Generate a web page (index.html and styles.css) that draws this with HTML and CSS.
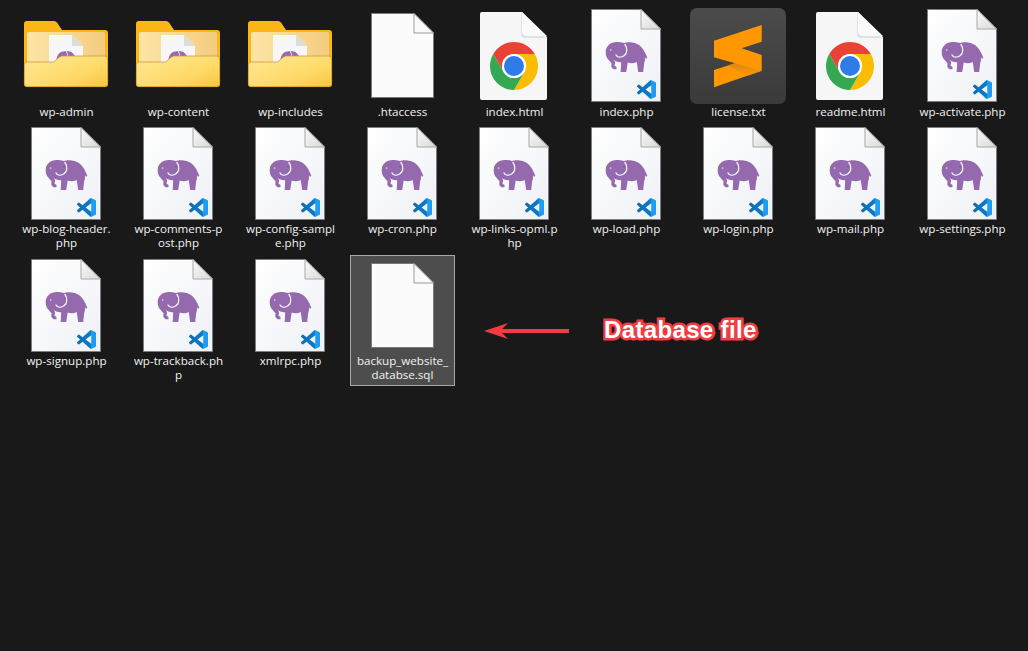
FILE: index.html
```html
<!DOCTYPE html>
<html lang="en">
<head>
    <meta charset="UTF-8">
    <meta name="viewport" content="width=device-width, initial-scale=1.0">
    <title>Website files</title>
    <link rel="stylesheet" href="styles.css">
</head>
<body>
    <!-- shared icons -->
    <svg class="icon-defs" aria-hidden="true">
        <defs>
            <linearGradient id="paper" x1="0" y1="0" x2="1" y2="1">
                <stop offset="0" stop-color="#ffffff"/>
                <stop offset="1" stop-color="#eef1f6"/>
            </linearGradient>
            <linearGradient id="fold" x1="0" y1="0" x2="1" y2="1">
                <stop offset="0" stop-color="#fafafa"/>
                <stop offset="1" stop-color="#d9d9d9"/>
            </linearGradient>
            <linearGradient id="vscode" x1="0" y1="0" x2="1" y2="0">
                <stop offset="0" stop-color="#0b6fb8"/>
                <stop offset="0.72" stop-color="#0a7bcb"/>
                <stop offset="0.72" stop-color="#1f9cf0"/>
                <stop offset="1" stop-color="#1f9cf0"/>
            </linearGradient>
            <linearGradient id="folder-inner" x1="0" y1="0" x2="1" y2="0">
                <stop offset="0" stop-color="#fde4a6"/>
                <stop offset="1" stop-color="#f3cd80"/>
            </linearGradient>
            <linearGradient id="folder-front" x1="0" y1="0" x2="1" y2="1">
                <stop offset="0" stop-color="#fee999"/>
                <stop offset="0.65" stop-color="#ffd966"/>
                <stop offset="1" stop-color="#fdc53c"/>
            </linearGradient>
            <linearGradient id="sublime-bg" x1="0" y1="0" x2="0" y2="1">
                <stop offset="0" stop-color="#4b4b4b"/>
                <stop offset="1" stop-color="#3a3a3a"/>
            </linearGradient>
            <linearGradient id="sublime-shade" x1="0" y1="0" x2="0" y2="1">
                <stop offset="0" stop-color="#dd8610"/>
                <stop offset="1" stop-color="#ff9800"/>
            </linearGradient>

            <symbol id="elephant" overflow="visible">
                <path fill="#9469ad" d="M11 0C5 0 0 4 0 10C0 14 1 16 3 18L6 21.5C5.5 23 5 25 7 26.5C8 27.5 10 27.5 11 27L10.5 24.5C9 24.5 8.5 23.5 9 22.5C10 20.5 9 19 7.5 17.5C9 19 11 20 13 20L15.5 20.5L15 30L20.5 30L22 20.5C25 21.5 28 21.5 31 20L32.5 30L37.5 30L38.5 21C39.5 19 39.5 17 39 15L40.5 17L41.5 15.5C39 9 35 1 26 .5C22 0 20 1 18 1C16 0 13 0 11 0Z"/>
                <path fill="none" stroke="#f3f4f7" stroke-width="1.3" d="M19 2C22 6 22 12 17 14.5C14 16 11 15 10 12.5"/>
                <circle cx="5" cy="8" r=".7" fill="#f3f4f7"/>
            </symbol>

            <symbol id="icon-php" overflow="visible">
                <path fill="url(#paper)" stroke="#7d7d7d" d="M17.5 .5H67L86.5 20V92.5H17.5Z"/>
                <path fill="url(#fold)" stroke="#a8a8a8" d="M67 .5V20H86.5Z"/>
                <use href="#elephant" x="31.7" y="33"/>
                <svg x="63" y="71" width="19" height="19" viewBox="0 0 24 24">
                    <path fill="url(#vscode)" d="M23.15 2.587L18.21.21a1.494 1.494 0 0 0-1.705.29l-9.46 8.63-4.12-3.128a.999.999 0 0 0-1.276.057L.327 7.261A1 1 0 0 0 .326 8.74L3.899 12 .326 15.26a1 1 0 0 0 .001 1.479L1.65 17.94a.999.999 0 0 0 1.276.057l4.12-3.128 9.46 8.63a1.492 1.492 0 0 0 1.704.29l4.942-2.377A1.5 1.5 0 0 0 24 20.06V3.939a1.5 1.5 0 0 0-.85-1.352zm-5.146 14.861L10.826 12l7.178-5.448v10.896z"/>
                </svg>
            </symbol>

            <symbol id="icon-blank" overflow="visible">
                <path fill="#fbfbfb" stroke="#7a7a7a" d="M21.5 4.5H64L83.5 24V88.5H21.5Z"/>
                <path fill="#fafafa" stroke="#9a9a9a" d="M64 4.5V24H83.5Z"/>
            </symbol>

            <symbol id="icon-chrome" overflow="visible">
                <path fill="#f6f6f6" d="M20 3H60L85 28V89a2 2 0 0 1-2 2H20a2 2 0 0 1-2-2V5a2 2 0 0 1 2-2Z"/>
                <path fill="#e2e2e2" d="M60 3L85 28H64a4 4 0 0 1-4-4Z" transform="translate(-1 1)"/>
                <path fill="#fafafa" d="M60 3L85 27H65a5 5 0 0 1-5-5Z"/>
                <g transform="translate(28 33)">
                    <path fill="#ea4335" d="M3.22 12A24 24 0 0 1 44.78 12H24A12 12 0 0 0 13.61 30Z"/>
                    <path fill="#fbbc04" d="M44.78 12A24 24 0 0 1 24 48L34.39 30A12 12 0 0 0 24 12Z"/>
                    <path fill="#34a853" d="M24 48A24 24 0 0 1 3.22 12L13.61 30A12 12 0 0 0 34.39 30Z"/>
                    <circle cx="24" cy="24" r="12" fill="#fff"/>
                    <circle cx="24" cy="24" r="10" fill="#2f7be8"/>
                </g>
            </symbol>

            <symbol id="icon-sublime" overflow="visible">
                <rect x="4" y="-1" width="96" height="96" rx="7" fill="url(#sublime-bg)"/>
                <path fill="#ff9800" d="M28 31.7L75.7 16V32.7L55.7 39.3L75.7 46V61.7L28 78.3V61L49 54.3L28 48.3Z"/>
                <path fill="url(#sublime-shade)" d="M49 54.3L75.7 61.7L62 66.5L42 56.5Z"/>
            </symbol>

            <symbol id="icon-folder" overflow="visible">
                <path fill="#fbb717" d="M10 15a3 3 0 0 1 3-3H40a4 4 0 0 1 3 1.5L48 21H91a3 3 0 0 1 3 3V75a3 3 0 0 1-3 3H13a3 3 0 0 1-3-3Z"/>
                <rect x="13" y="23" width="78" height="40" rx="2" fill="url(#folder-inner)"/>
                <path fill="#f7f7f9" d="M35 26H58L69 37V60H35Z"/>
                <path fill="#dcdcdc" d="M58 26V37H69Z"/>
                <path fill="#9469ad" d="M42 55C42 46 46 42 50 42.5C55 41 62 43 63 55Z"/>
                <path fill="none" stroke="#f3f4f7" d="M52 42C54 45 54 48 52 52"/>
                <path fill="url(#folder-front)" stroke="#d39d32" stroke-width=".8" d="M10.4 56a3 3 0 0 1 3-3H38C42 53 44 47 49 47H90.6a3 3 0 0 1 3 3V74.6a3 3 0 0 1-3 3H13.4a3 3 0 0 1-3-3Z"/>
            </symbol>
        </defs>
    </svg>

    <div class="file-grid">
        <div class="file first-row"><svg class="file-icon" viewBox="0 -1 105 96"><use href="#icon-folder"/></svg><span class="file-name">wp-admin</span></div>
        <div class="file first-row"><svg class="file-icon" viewBox="0 -1 105 96"><use href="#icon-folder"/></svg><span class="file-name">wp-content</span></div>
        <div class="file first-row"><svg class="file-icon" viewBox="0 -1 105 96"><use href="#icon-folder"/></svg><span class="file-name">wp-includes</span></div>
        <div class="file first-row"><svg class="file-icon" viewBox="0 -1 105 96"><use href="#icon-blank"/></svg><span class="file-name">.htaccess</span></div>
        <div class="file first-row"><svg class="file-icon" viewBox="0 -1 105 96"><use href="#icon-chrome"/></svg><span class="file-name">index.html</span></div>
        <div class="file first-row"><svg class="file-icon" viewBox="0 -1 105 96"><use href="#icon-php"/></svg><span class="file-name">index.php</span></div>
        <div class="file first-row"><svg class="file-icon" viewBox="0 -1 105 96"><use href="#icon-sublime"/></svg><span class="file-name">license.txt</span></div>
        <div class="file first-row"><svg class="file-icon" viewBox="0 -1 105 96"><use href="#icon-chrome"/></svg><span class="file-name">readme.html</span></div>
        <div class="file first-row"><svg class="file-icon" viewBox="0 -1 105 96"><use href="#icon-php"/></svg><span class="file-name">wp-activate.php</span></div>

        <div class="file"><svg class="file-icon" viewBox="0 -1 105 96"><use href="#icon-php"/></svg><span class="file-name">wp-blog-header.<br>php</span></div>
        <div class="file"><svg class="file-icon" viewBox="0 -1 105 96"><use href="#icon-php"/></svg><span class="file-name">wp-comments-p<br>ost.php</span></div>
        <div class="file"><svg class="file-icon" viewBox="0 -1 105 96"><use href="#icon-php"/></svg><span class="file-name">wp-config-sampl<br>e.php</span></div>
        <div class="file"><svg class="file-icon" viewBox="0 -1 105 96"><use href="#icon-php"/></svg><span class="file-name">wp-cron.php</span></div>
        <div class="file"><svg class="file-icon" viewBox="0 -1 105 96"><use href="#icon-php"/></svg><span class="file-name">wp-links-opml.p<br>hp</span></div>
        <div class="file"><svg class="file-icon" viewBox="0 -1 105 96"><use href="#icon-php"/></svg><span class="file-name">wp-load.php</span></div>
        <div class="file"><svg class="file-icon" viewBox="0 -1 105 96"><use href="#icon-php"/></svg><span class="file-name">wp-login.php</span></div>
        <div class="file"><svg class="file-icon" viewBox="0 -1 105 96"><use href="#icon-php"/></svg><span class="file-name">wp-mail.php</span></div>
        <div class="file"><svg class="file-icon" viewBox="0 -1 105 96"><use href="#icon-php"/></svg><span class="file-name">wp-settings.php</span></div>

        <div class="file"><svg class="file-icon" viewBox="0 -1 105 96"><use href="#icon-php"/></svg><span class="file-name">wp-signup.php</span></div>
        <div class="file"><svg class="file-icon" viewBox="0 -1 105 96"><use href="#icon-php"/></svg><span class="file-name">wp-trackback.ph<br>p</span></div>
        <div class="file"><svg class="file-icon" viewBox="0 -1 105 96"><use href="#icon-php"/></svg><span class="file-name">xmlrpc.php</span></div>
        <div class="file selected"><svg class="file-icon" viewBox="0 -1 105 96"><use href="#icon-blank"/></svg><span class="file-name">backup_website_<br>databse.sql</span></div>
    </div>

    <!-- annotation drawn over the screenshot -->
    <svg class="note-arrow" viewBox="0 0 86 18" aria-hidden="true">
        <path fill="#ef3d42" d="M0 9L24 1L18 7H85V11H18L24 17Z"/>
    </svg>
    <div class="note-text">Database file</div>
</body>
</html>
```

FILE: styles.css
```css
body {
    font-family: 'Open Sans', 'Noto Sans', sans-serif;
    background-color: #191919;
    margin: 0;
    height: 651px;
    overflow: hidden;
    position: relative;
}

.icon-defs {
    display: block;
    width: 0;
    height: 0;
}

.file-grid {
    display: grid;
    grid-template-columns: repeat(9, 105px);
    column-gap: 7px;
    row-gap: 1px;
    align-items: start;
    padding: 5px 0 0 14px;
}

.file {
    display: flex;
    flex-direction: column;
    align-items: center;
    padding: 3px 0 4px;
}

.file.first-row {
    padding-bottom: 3px;
}

.first-row .file-name {
    margin-top: 1px;
}

.file.selected {
    background-color: #4d4d4d;
    outline: 1px solid #a6a6a6;
    outline-offset: -1px;
}

.file-icon {
    display: block;
    width: 105px;
    height: 96px;
    overflow: visible;
}

.file-name {
    color: #f2f2f2;
    font-size: 11.6px;
    line-height: 14px;
    text-align: center;
    white-space: nowrap;
}

.note-arrow {
    position: absolute;
    left: 484px;
    top: 322px;
    width: 86px;
    height: 18px;
}

.note-text {
    position: absolute;
    left: 604px;
    top: 316px;
    color: #fff;
    font-family: 'Liberation Sans', Arial, sans-serif;
    font-size: 24px;
    font-weight: bold;
    letter-spacing: 0.35px;
    line-height: 28px;
    white-space: nowrap;
    -webkit-text-stroke: 5px #ef3d42;
    paint-order: stroke fill;
}
```
